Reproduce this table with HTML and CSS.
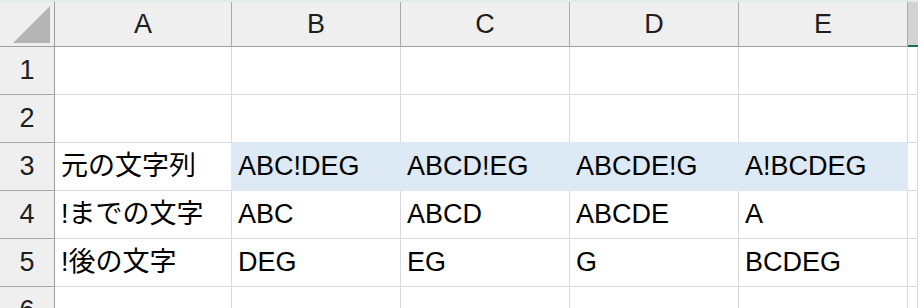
FILE: index.html
```html
<!DOCTYPE html>
<html lang="ja">
<head>
<meta charset="utf-8">
<link rel="stylesheet" href="styles.css">
</head>
<body>
<div class="topband"></div>
<div class="sheet">
  <div class="corner"><svg class="tri" width="38" height="38" viewBox="0 0 38 38"><polygon points="37,0 37,37 0,37" fill="#b4b4b4"/></svg></div>
  <div class="ch">A</div>
  <div class="ch">B</div>
  <div class="ch">C</div>
  <div class="ch">D</div>
  <div class="ch">E</div>
  <div class="ch sel"></div>

  <div class="rh">1</div>
  <div class="c"></div><div class="c"></div><div class="c"></div><div class="c"></div><div class="c"></div><div class="c"></div>

  <div class="rh">2</div>
  <div class="c"></div><div class="c hb"></div><div class="c hb"></div><div class="c hb"></div><div class="c hb"></div><div class="c"></div>

  <div class="rh">3</div>
  <div class="c hr">元の文字列</div>
  <div class="c hl">ABC!DEG</div>
  <div class="c hl">ABCD!EG</div>
  <div class="c hl">ABCDE!G</div>
  <div class="c hl">A!BCDEG</div>
  <div class="c"></div>

  <div class="rh">4</div>
  <div class="c">!までの文字</div>
  <div class="c">ABC</div>
  <div class="c">ABCD</div>
  <div class="c">ABCDE</div>
  <div class="c">A</div>
  <div class="c"></div>

  <div class="rh">5</div>
  <div class="c">!後の文字</div>
  <div class="c">DEG</div>
  <div class="c">EG</div>
  <div class="c">G</div>
  <div class="c">BCDEG</div>
  <div class="c"></div>

  <div class="rh">6</div>
  <div class="c"></div><div class="c"></div><div class="c"></div><div class="c"></div><div class="c"></div><div class="c"></div>
</div>
</body>
</html>
```
FILE: styles.css
```css
html, body {
  margin: 0;
  padding: 0;
  width: 918px;
  height: 308px;
  overflow: hidden;
  background: #ffffff;
}
body {
  font-family: "Liberation Sans", "Noto Sans CJK JP", sans-serif;
  font-size: 27px;
  line-height: 27px;
  color: #000;
}
.topband {
  height: 2px;
  background: #e2eaea;
}
.sheet {
  display: grid;
  grid-template-columns: 55px 177px 169px 169px 169px 169px 1fr;
  grid-template-rows: 45px repeat(6, 48px);
}
.sheet > div {
  box-sizing: border-box;
  white-space: nowrap;
  overflow: visible;
}
.corner {
  background: #efefef;
  border-right: 1px solid #9e9e9e;
  border-bottom: 1px solid #9e9e9e;
  display: flex;
  align-items: flex-start;
  justify-content: flex-end;
  padding: 4px 3px 0 0;
}
.tri { display: block; }
.ch {
  background: #efefef;
  border-right: 1px solid #aaaaaa;
  border-bottom: 1px solid #9e9e9e;
  display: flex;
  align-items: flex-end;
  justify-content: center;
  padding-bottom: 8px;
  color: #1e1e1e;
}
.ch.sel {
  background: #d2d2d2;
  border-right: none;
  border-bottom: 2px solid #1e7145;
}
.rh {
  background: #efefef;
  border-right: 1px solid #9e9e9e;
  border-bottom: 1px solid #a8a8a8;
  display: flex;
  align-items: flex-end;
  justify-content: center;
  padding-bottom: 10px;
  color: #1e1e1e;
}
.c {
  border-right: 1px solid #dadada;
  border-bottom: 1px solid #dadada;
  display: flex;
  align-items: flex-end;
  padding: 0 0 10px 6px;
}
.hl {
  background: #dde9f5;
  border-right-color: #dde9f5;
  border-bottom-color: #dde9f5;
}
.hb { border-bottom-color: #dde9f5; }
.hr { border-right-color: #dde9f5; }
```
